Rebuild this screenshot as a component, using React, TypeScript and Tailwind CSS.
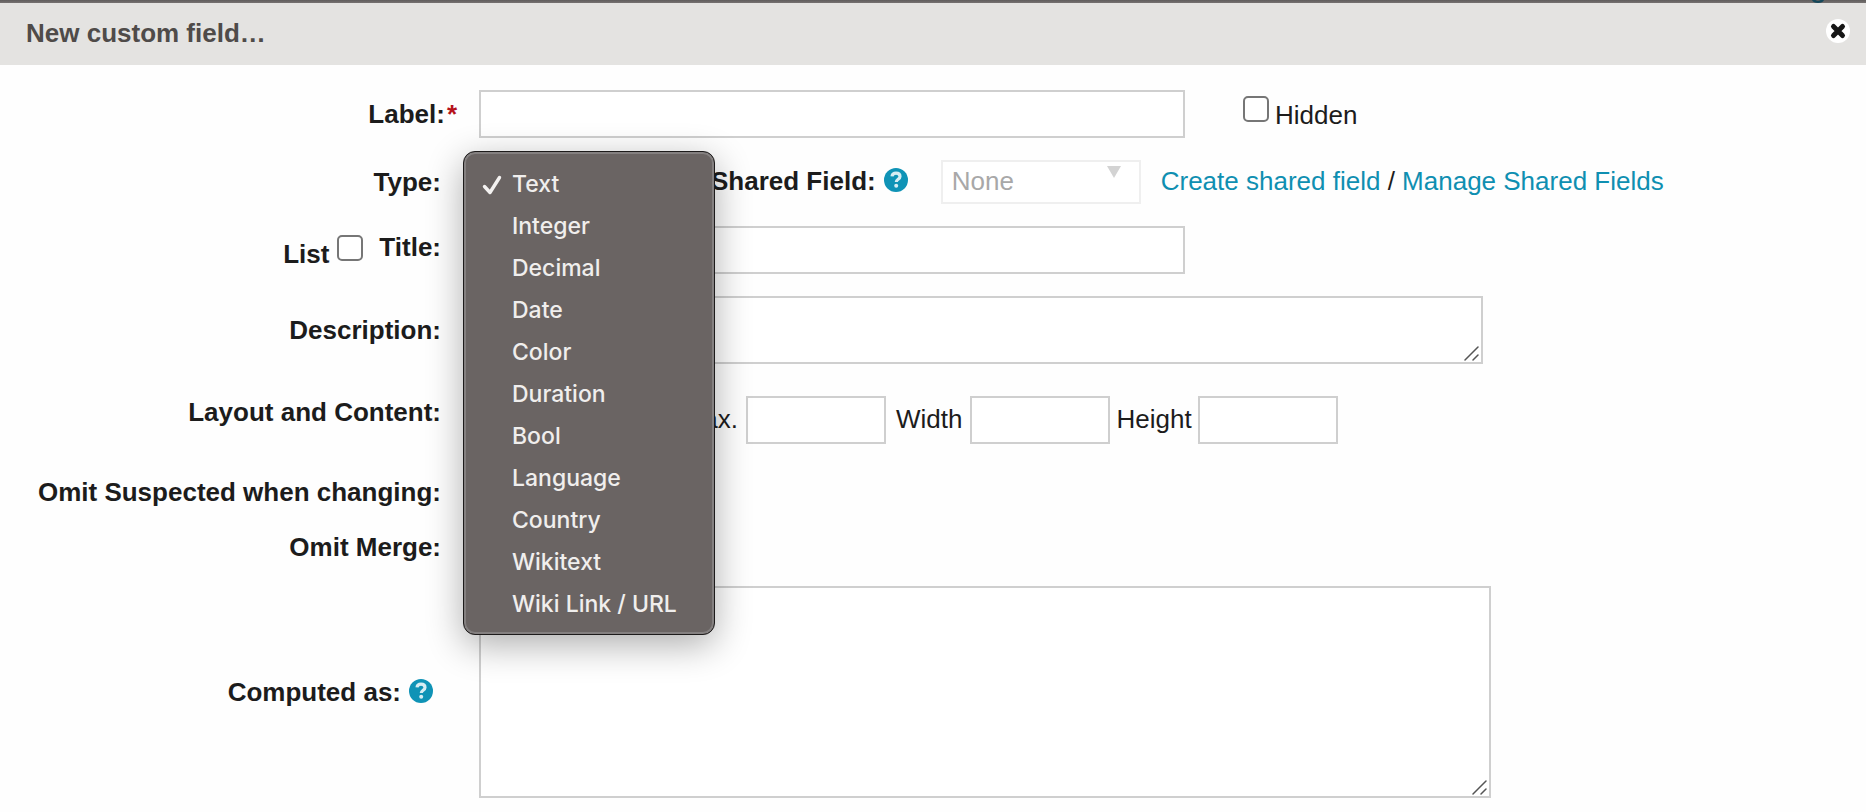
import React, { useState } from "react";

const TYPES = [
  "Text",
  "Integer",
  "Decimal",
  "Date",
  "Color",
  "Duration",
  "Bool",
  "Language",
  "Country",
  "Wikitext",
  "Wiki Link / URL",
];

const FIELD = "h-12 border-2 border-[#cfcfcf] bg-white px-2 outline-none";
const CHECKBOX =
  "size-[26px] shrink-0 appearance-none rounded-[5px] border-2 border-[#767676] bg-white checked:bg-[#0a93b5]";

function HelpButton({ label }: { label: string }) {
  return (
    <button type="button" aria-label={label} className="size-6 shrink-0">
      <svg viewBox="0 0 24 24" className="size-6">
        <circle cx="12" cy="12" r="12" fill="#0f93b6" />
        <path
          d="M8 8.400C8.300 6.200 9.900 5.200 12 5.200c2.300 0 4 1.200 4 3.200 0 2.900-3.700 2.800-3.700 5.600"
          fill="none"
          stroke="#d6edf3"
          strokeWidth="3.200"
        />
        <circle cx="12.200" cy="17.800" r="2" fill="#d6edf3" />
      </svg>
    </button>
  );
}

function ResizeGrip() {
  return (
    <svg
      viewBox="0 0 15 15"
      className="pointer-events-none absolute right-1 bottom-[3px] size-[15px]"
      fill="none"
      stroke="#555"
      strokeWidth="1.500"
      strokeLinecap="round"
    >
      <path d="M1 14 14 1M9 14l5-5" />
    </svg>
  );
}

function Row({
  label,
  className = "",
  labelClass = "pr-[38px]",
  children,
}: {
  label: React.ReactNode;
  className?: string;
  labelClass?: string;
  children: React.ReactNode;
}) {
  return (
    <div className={`flex ${className}`}>
      <div
        className={`flex w-[479px] shrink-0 items-center justify-end font-bold whitespace-nowrap ${labelClass}`}
      >
        {label}
      </div>
      <div className="flex min-w-0 flex-1 items-center">{children}</div>
    </div>
  );
}

function TypePicker() {
  const [open, setOpen] = useState(true);
  const [value, setValue] = useState("Text");
  return (
    <div className="relative w-[232px] shrink-0">
      <button
        id="type"
        type="button"
        aria-haspopup="listbox"
        aria-expanded={open}
        onClick={() => setOpen(!open)}
        className="block h-11 w-[200px] border-2 border-[#cfcfcf] bg-white px-2 text-left"
      >
        {open ? "" : value}
      </button>
      {open && (
        <ul
          role="listbox"
          aria-label="Type"
          className="absolute -top-[9px] -left-4 z-10 w-[252px] rounded-xl border border-[#1d1b1b] bg-[#6a6463] pt-[11px] pb-[9px] font-['Inter',sans-serif] text-[23px] font-medium text-[#f0eeed] shadow-[inset_0_0_0_2px_#848080,0_10px_36px_rgba(0,0,0,0.32)]"
        >
          {TYPES.map((type) => (
            <li
              key={type}
              role="option"
              aria-selected={type === value}
              onClick={() => {
                setValue(type);
                setOpen(false);
              }}
              className="flex h-[42px] cursor-default items-center pl-[18px] whitespace-nowrap"
            >
              <span className="w-[30px] shrink-0">
                {type === value && (
                  <svg
                    viewBox="0 0 20 20"
                    className="mt-0.5 size-5"
                    fill="none"
                    stroke="#f4f2f1"
                    strokeWidth="3.400"
                    strokeLinecap="round"
                    strokeLinejoin="round"
                  >
                    <path d="M2.500 11.500 8 17.500 17.500 2.500" />
                  </svg>
                )}
              </span>
              {type}
            </li>
          ))}
        </ul>
      )}
    </div>
  );
}

export default function App() {
  return (
    <div className="min-h-screen bg-[#fefefe] font-['Liberation_Sans',Arial,sans-serif] text-[26px] leading-[30px] text-[#1c1c1c]">
      <div className="flex h-[3px] justify-end bg-linear-to-b from-[#605d5c] to-[#767271] pr-[42px]">
        <svg viewBox="0 0 12 3" className="h-[3px] w-3">
          <path d="M0 0C1 4 11 4 12 0H8.500C8 1 4 1 3.500 0Z" fill="#16485a" />
        </svg>
      </div>
      <header className="flex h-[62px] items-center justify-between bg-[#e4e3e1] pr-4 pb-1.5 pl-[26px]">
        <h1 className="pt-1 font-bold text-[#4f4b49]">New custom field…</h1>
        <button type="button" aria-label="Close" className="size-6">
          <svg viewBox="0 0 24 24" className="size-6">
            <circle cx="12" cy="12" r="12" fill="#fff" />
            <path
              d="m7.500 7.500 9 9m0-9-9 9"
              stroke="#161616"
              strokeWidth="5"
              strokeLinecap="round"
            />
          </svg>
        </button>
      </header>

      <form className="pt-[25px]">
        <Row
          labelClass="pr-[22px]"
          label={
            <label htmlFor="label">
              Label:<span className="ml-0.5 text-[#b5121b]">*</span>
            </label>
          }
        >
          <input id="label" className={`w-full max-w-[706px] ${FIELD}`} />
          <label className="ml-[58px] flex items-center gap-1.5">
            <input type="checkbox" className={`mb-2.5 ${CHECKBOX}`} />
            <span className="pt-0.5">Hidden</span>
          </label>
        </Row>

        <Row className="mt-[22px]" label={<label htmlFor="type">Type:</label>}>
          <TypePicker />
          <label htmlFor="shared" className="pb-0.5 font-bold whitespace-nowrap">
            Shared Field:
          </label>
          <span className="mr-[33px] mb-1 ml-2 flex">
            <HelpButton label="Help on shared fields" />
          </span>
          <span className="relative w-[200px] shrink-0">
            <select
              id="shared"
              disabled
              className="block h-11 w-full appearance-none border-2 border-[#efefef] bg-white pb-0.5 pl-[9px] text-[#a8a8a8] opacity-100"
            >
              <option>None</option>
            </select>
            <svg
              viewBox="0 0 14 12"
              className="pointer-events-none absolute top-1.5 right-5 h-3 w-3.5"
            >
              <path d="M0 0h14L7 12Z" fill="#d3d3d3" />
            </svg>
          </span>
          <span className="ml-5 pb-0.5 whitespace-nowrap">
            <a href="#create" className="text-[#0f8fb1]">
              Create shared field
            </a>{" "}
            /{" "}
            <a href="#manage" className="text-[#0f8fb1]">
              Manage Shared Fields
            </a>
          </span>
        </Row>

        <Row
          className="mt-4"
          label={
            <>
              <label htmlFor="list" className="pt-3.5">
                List
              </label>
              <input id="list" type="checkbox" className={`mt-0.5 mr-4 ml-2 ${CHECKBOX}`} />
              <label htmlFor="title">Title:</label>
            </>
          }
        >
          <input id="title" className={`mt-1.5 w-full max-w-[706px] ${FIELD}`} />
        </Row>

        <Row className="mt-[22px]" label={<label htmlFor="description">Description:</label>}>
          <div className="relative w-full max-w-[1004px]">
            <textarea
              id="description"
              className="block h-[68px] w-full resize-none border-2 border-[#cfcfcf] bg-white px-2 outline-none"
            />
            <ResizeGrip />
          </div>
        </Row>

        <Row className="mt-4" label={<span>Layout and Content:</span>}>
          <div className="flex items-center pt-4">
            <label htmlFor="max" className="w-[267px] pr-2 pb-0.5 text-right">
              Max.
            </label>
            <input id="max" className={`w-[140px] ${FIELD}`} />
            <label htmlFor="width" className="mr-2 ml-2.5 pb-0.5">
              Width
            </label>
            <input id="width" className={`w-[140px] ${FIELD}`} />
            <label htmlFor="height" className="mx-1.5 pb-0.5">
              Height
            </label>
            <input id="height" className={`w-[140px] ${FIELD}`} />
          </div>
        </Row>

        <Row
          className="mt-7 h-10"
          label={<label htmlFor="omit-suspected">Omit Suspected when changing:</label>}
        >
          <input id="omit-suspected" type="checkbox" className={CHECKBOX} />
        </Row>

        <Row
          className="mt-[15px] h-10"
          label={<label htmlFor="omit-merge">Omit Merge:</label>}
        >
          <input id="omit-merge" type="checkbox" className={CHECKBOX} />
        </Row>

        <Row
          className="mt-[19px]"
          labelClass="pr-[46px]"
          label={
            <>
              <label htmlFor="computed" className="mr-2">
                Computed as:
              </label>
              <span className="mb-0.5 flex">
                <HelpButton label="Help on computed values" />
              </span>
            </>
          }
        >
          <div className="relative w-full max-w-[1012px]">
            <textarea
              id="computed"
              className="block h-[212px] w-full resize-none border-2 border-[#cfcfcf] bg-white px-2 outline-none"
            />
            <ResizeGrip />
          </div>
        </Row>
      </form>
    </div>
  );
}
